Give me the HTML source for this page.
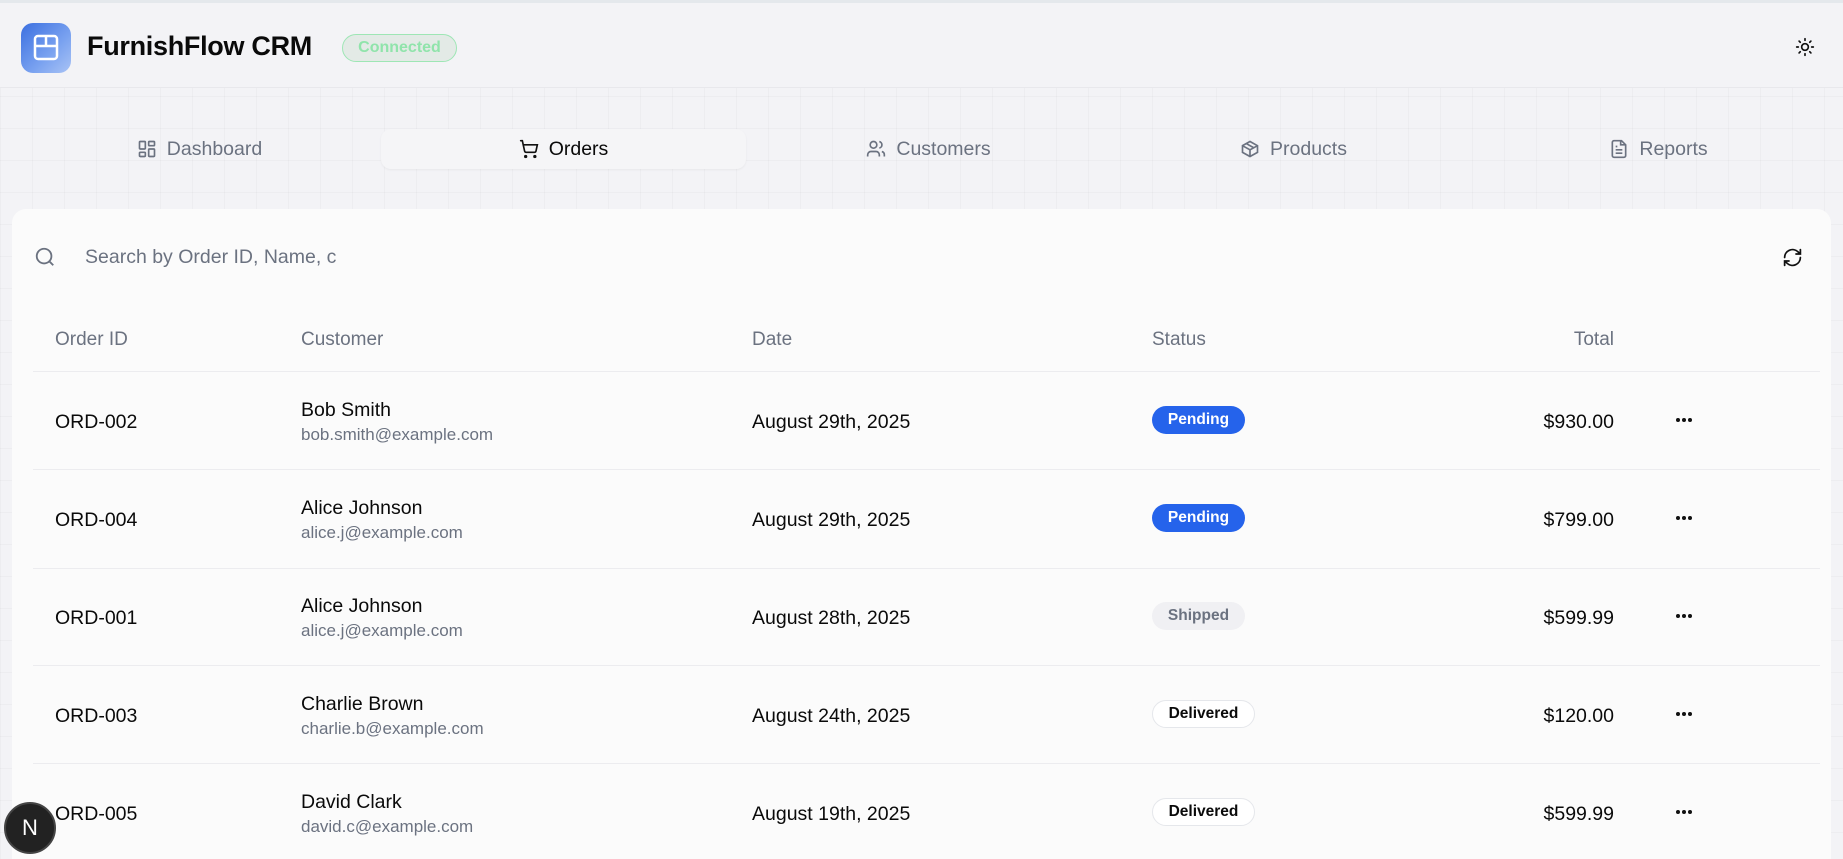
<!DOCTYPE html>
<html style="overflow:hidden;width:1843px;height:859px"><head><meta charset="utf-8"><style>
*{box-sizing:border-box;margin:0;padding:0}
body{width:1843px;height:859px;overflow:hidden;font-family:"Liberation Sans",sans-serif;background:#f3f3f6;
background-image:linear-gradient(90deg,rgba(0,0,0,0.025) 1px,transparent 1px),linear-gradient(rgba(0,0,0,0.025) 1px,transparent 1px);background-size:32px 32px;position:relative;color:#0a0a0a}
.hdr{position:absolute;left:0;top:0;width:1843px;height:88px;background:#f3f3f6;border-bottom:1px solid #e8e8ec;border-top:3px solid #e4e8ec}
.logo{position:absolute;left:21px;top:20px;width:50px;height:50px;border-radius:12px;background:linear-gradient(135deg,#3b6fe0,#7aa2f0 60%,#a9c3f5)}
.title{position:absolute;left:87px;top:28px;font-size:27px;font-weight:bold;letter-spacing:-0.3px}
.conn{position:absolute;left:342px;top:31px;width:115px;height:28px;border:1px solid #9ee6b5;border-radius:14px;background:#e3eae6;color:#90e4ab;font-weight:bold;font-size:16px;text-align:center;line-height:26px}
.tab{position:absolute;top:129px;height:40px;width:365px;display:flex;align-items:center;justify-content:center;gap:10px;font-size:19.5px;color:#6b7280}
.tab.on{background:#f5f5f7;border-radius:10px;color:#0a0a0a;box-shadow:0 1px 2px rgba(0,0,0,0.05)}
.card{position:absolute;left:12px;top:209px;width:1819px;height:650px;background:#fbfbfb;border-radius:14px 14px 0 0}
.ph{position:absolute;left:85px;top:246px;font-size:19.5px;color:#6b7280}
.th{position:absolute;top:329px;font-size:19px;color:#6b7280}
.line{position:absolute;left:33px;width:1787px;height:1px;background:#ececef}
.c{position:absolute;font-size:19.5px;color:#0a0a0a}
.r{position:absolute;right:229px;font-size:19.5px;color:#0a0a0a}
.em{position:absolute;font-size:17px;color:#6b7280}
.b{position:absolute;left:1152px;height:28px;border-radius:14px;font-weight:bold;font-size:15.5px;line-height:28px;text-align:center}
.pend{background:#2563eb;color:#fff;width:93px}
.ship{background:#f0f0f3;color:#6b7280;width:93px}
.del{background:#fff;border:1px solid #e5e7eb;color:#0a0a0a;width:103px;line-height:26px}
.dots{position:absolute;left:1676px;width:18px;height:4px}
.dots i{position:absolute;top:0;width:4px;height:4px;border-radius:2px;background:#111}
</style></head><body>
<div class="hdr">
<div class="logo"><svg width="50" height="50" viewBox="0 0 50 50" fill="none" stroke="#fff" stroke-width="2.5"><rect x="14" y="13" width="22" height="23" rx="3"/><path d="M14 23h22M25 13v10"/></svg></div>
<div class="title">FurnishFlow CRM</div>
<div class="conn">Connected</div>
<svg style="position:absolute;left:1795px;top:34px" width="20" height="20" viewBox="0 0 24 24" fill="none" stroke="#111" stroke-width="2" stroke-linecap="round"><circle cx="12" cy="12" r="4"/><path d="M12 2v2M12 20v2M4.9 4.9l1.4 1.4M17.7 17.7l1.4 1.4M2 12h2M20 12h2M6.3 17.7l-1.4 1.4M19.1 4.9l-1.4 1.4"/></svg>
</div>
<div class="tab" style="left:17px"><svg width="20" height="20" viewBox="0 0 24 24" fill="none" stroke="#6b7280" stroke-width="2"><rect x="3" y="3" width="7" height="9" rx="1"/><rect x="14" y="3" width="7" height="5" rx="1"/><rect x="14" y="12" width="7" height="9" rx="1"/><rect x="3" y="16" width="7" height="5" rx="1"/></svg>Dashboard</div>
<div class="tab on" style="left:381px"><svg width="20" height="20" viewBox="0 0 24 24" fill="none" stroke="#111" stroke-width="2" stroke-linecap="round"><circle cx="8" cy="21" r="1"/><circle cx="19" cy="21" r="1"/><path d="M2 2h2l2.7 12.4a2 2 0 0 0 2 1.6h9.7a2 2 0 0 0 2-1.6L22 7H5"/></svg>Orders</div>
<div class="tab" style="left:746px"><svg width="20" height="20" viewBox="0 0 24 24" fill="none" stroke="#6b7280" stroke-width="2"><path d="M16 21v-2a4 4 0 0 0-4-4H6a4 4 0 0 0-4 4v2"/><circle cx="9" cy="7" r="4"/><path d="M22 21v-2a4 4 0 0 0-3-3.9M16 3.1a4 4 0 0 1 0 7.8"/></svg>Customers</div>
<div class="tab" style="left:1111px"><svg width="20" height="20" viewBox="0 0 24 24" fill="none" stroke="#6b7280" stroke-width="2"><path d="M21 8l-9-5-9 5v8l9 5 9-5z"/><path d="M3 8l9 5 9-5M12 13v8M7.5 5.5l9 5"/></svg>Products</div>
<div class="tab" style="left:1476px"><svg width="20" height="20" viewBox="0 0 24 24" fill="none" stroke="#6b7280" stroke-width="2"><path d="M15 2H6a2 2 0 0 0-2 2v16a2 2 0 0 0 2 2h12a2 2 0 0 0 2-2V7z"/><path d="M14 2v5h6M8 13h8M8 17h8M8 9h2"/></svg>Reports</div>
<div class="card"></div>
<svg style="position:absolute;left:34px;top:246px" width="22" height="22" viewBox="0 0 24 24" fill="none" stroke="#6b7280" stroke-width="2"><circle cx="11" cy="11" r="8"/><path d="M21 21l-4.3-4.3"/></svg>
<div class="ph">Search by Order ID, Name, c</div>
<svg style="position:absolute;left:1782px;top:247px" width="21" height="21" viewBox="0 0 24 24" fill="none" stroke="#111" stroke-width="2" stroke-linecap="round"><path d="M3 12a9 9 0 0 1 15-6.7L21 8M21 3v5h-5M21 12a9 9 0 0 1-15 6.7L3 16M8 16H3v5"/></svg>
<div class="th" style="left:55px">Order ID</div>
<div class="th" style="left:301px">Customer</div>
<div class="th" style="left:752px">Date</div>
<div class="th" style="left:1152px">Status</div>
<div class="th" style="right:229px">Total</div>
<div class="line" style="top:371px"></div>
<div class="line" style="top:469px"></div>
<div class="line" style="top:568px"></div>
<div class="line" style="top:665px"></div>
<div class="line" style="top:763px"></div>

<div class="c" style="left:55px;top:411px">ORD-002</div><div class="c" style="left:301px;top:399px">Bob Smith</div><div class="em" style="left:301px;top:425px">bob.smith@example.com</div><div class="c" style="left:752px;top:411px">August 29th, 2025</div><div class="b pend" style="top:406px">Pending</div><div class="r" style="top:411px">$930.00</div><div class="dots" style="top:418px"><i style="left:0"></i><i style="left:6px"></i><i style="left:12px"></i></div>

<div class="c" style="left:55px;top:509px">ORD-004</div><div class="c" style="left:301px;top:497px">Alice Johnson</div><div class="em" style="left:301px;top:523px">alice.j@example.com</div><div class="c" style="left:752px;top:509px">August 29th, 2025</div><div class="b pend" style="top:504px">Pending</div><div class="r" style="top:509px">$799.00</div><div class="dots" style="top:516px"><i style="left:0"></i><i style="left:6px"></i><i style="left:12px"></i></div>

<div class="c" style="left:55px;top:607px">ORD-001</div><div class="c" style="left:301px;top:595px">Alice Johnson</div><div class="em" style="left:301px;top:621px">alice.j@example.com</div><div class="c" style="left:752px;top:607px">August 28th, 2025</div><div class="b ship" style="top:602px">Shipped</div><div class="r" style="top:607px">$599.99</div><div class="dots" style="top:614px"><i style="left:0"></i><i style="left:6px"></i><i style="left:12px"></i></div>

<div class="c" style="left:55px;top:705px">ORD-003</div><div class="c" style="left:301px;top:693px">Charlie Brown</div><div class="em" style="left:301px;top:719px">charlie.b@example.com</div><div class="c" style="left:752px;top:705px">August 24th, 2025</div><div class="b del" style="top:700px">Delivered</div><div class="r" style="top:705px">$120.00</div><div class="dots" style="top:712px"><i style="left:0"></i><i style="left:6px"></i><i style="left:12px"></i></div>

<div class="c" style="left:55px;top:803px">ORD-005</div><div class="c" style="left:301px;top:791px">David Clark</div><div class="em" style="left:301px;top:817px">david.c@example.com</div><div class="c" style="left:752px;top:803px">August 19th, 2025</div><div class="b del" style="top:798px">Delivered</div><div class="r" style="top:803px">$599.99</div><div class="dots" style="top:810px"><i style="left:0"></i><i style="left:6px"></i><i style="left:12px"></i></div>

<div style="position:absolute;left:4px;top:802px;width:52px;height:52px;border-radius:26px;background:#222;border:2px solid #444;color:#fff;font-size:22px;text-align:center;line-height:48px">N</div>
</body></html>
